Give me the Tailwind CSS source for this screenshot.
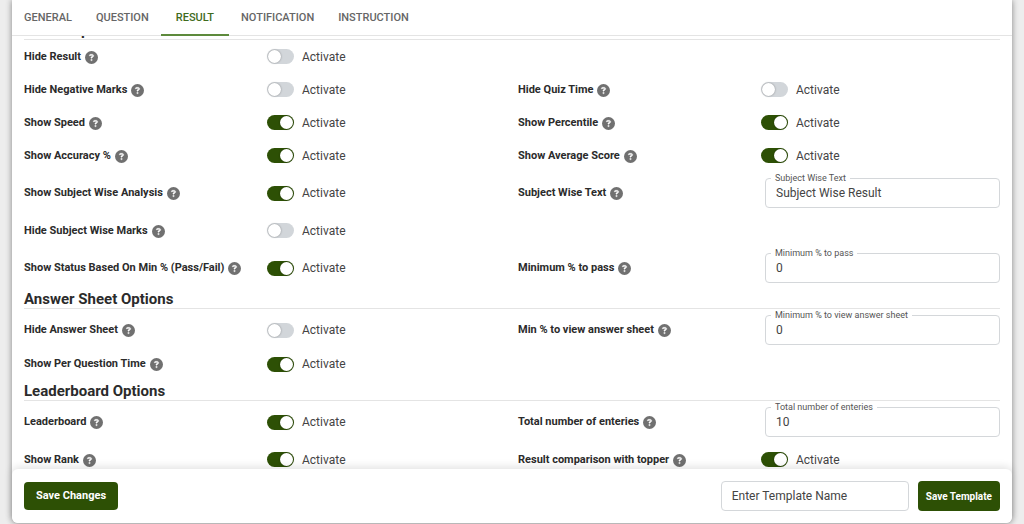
<!DOCTYPE html>
<html lang="en">
<head>
  <meta charset="UTF-8">
  <meta name="viewport" content="width=device-width, initial-scale=1.0">
  <title>Quiz Template Settings</title>
  <script src="https://cdn.jsdelivr.net/npm/@tailwindcss/browser@4"></script>
</head>
<body class="bg-[#ededed] font-['Roboto',sans-serif] text-[#2b2b2b]">
  <div class="flex h-screen flex-col px-3 pb-px">
    <div class="flex min-h-0 flex-1 flex-col rounded-b-md bg-white shadow-[0_0_6px_rgba(0,0,0,0.45)]">

      <!-- Tabs -->
      <nav class="flex h-9 shrink-0 border-b border-[#e4e4e4] text-[11px] font-medium text-[#666]">
        <button type="button" class="px-3 pt-0.5">GENERAL</button>
        <button type="button" class="px-3 pt-0.5">QUESTION</button>
        <button type="button" class="-mb-px border-b-2 border-[#5d8a3c] px-[15px] pt-0.5 text-[#3f6b1c]">RESULT</button>
        <button type="button" class="px-3 pt-0.5">NOTIFICATION</button>
        <button type="button" class="px-3 pt-0.5">INSTRUCTION</button>
      </nav>

      <!-- Settings -->
      <main class="min-h-0 flex-1 overflow-hidden px-3">
        <section class="-mt-4">
          <h2 class="h-5 border-b border-[#e4e4e4] text-[15px] leading-5 font-bold">Result Options</h2>
          <div id="result-options"></div>
        </section>
        <section>
          <h2 class="h-5 border-b border-[#e4e4e4] text-[15px] leading-5 font-bold">Answer Sheet Options</h2>
          <div id="answer-options"></div>
        </section>
        <section class="pt-1">
          <h2 class="h-5 border-b border-[#e4e4e4] text-[15px] leading-5 font-bold">Leaderboard Options</h2>
          <div id="leaderboard-options"></div>
        </section>
      </main>

      <!-- Save bar -->
      <footer class="relative flex shrink-0 items-center justify-between rounded-md bg-white px-3 py-3 shadow-[0_-2px_8px_rgba(0,0,0,0.12)]">
        <button type="button" class="h-7 rounded bg-[#2d5005] px-3 text-[11px] font-bold text-white">Save Changes</button>
        <div class="flex gap-[9px]">
          <input type="text" aria-label="Template name" placeholder="Enter Template Name"
            class="h-[30px] w-[188px] rounded border border-[#d4d7da] px-2.5 text-xs text-[#444] placeholder:text-[#444]">
          <button type="button" class="h-[30px] rounded bg-[#2d5005] px-2 text-[10px] font-bold text-white">Save Template</button>
        </div>
      </footer>
    </div>
  </div>

  <script>
    const resultRows = [
      [{ name: 'Hide Result', on: false }],
      [{ name: 'Hide Negative Marks', on: false }, { name: 'Hide Quiz Time', on: false }],
      [{ name: 'Show Speed', on: true }, { name: 'Show Percentile', on: true }],
      [{ name: 'Show Accuracy %', on: true }, { name: 'Show Average Score', on: true }],
      [{ name: 'Show Subject Wise Analysis', on: true }, { name: 'Subject Wise Text', field: 'Subject Wise Text', value: 'Subject Wise Result' }],
      [{ name: 'Hide Subject Wise Marks', on: false }],
      [{ name: 'Show Status Based On Min % (Pass/Fail)', on: true }, { name: 'Minimum % to pass', field: 'Minimum % to pass', value: '0' }]
    ];
    const answerRows = [
      [{ name: 'Hide Answer Sheet', on: false }, { name: 'Min % to view answer sheet', field: 'Minimum % to view answer sheet', value: '0' }],
      [{ name: 'Show Per Question Time', on: true }]
    ];
    const leaderboardRows = [
      [{ name: 'Leaderboard', on: true }, { name: 'Total number of enteries', field: 'Total number of enteries', value: '10' }],
      [{ name: 'Show Rank', on: true }, { name: 'Result comparison with topper', on: true }]
    ];

    const helpIcon = `
      <svg class="size-[13px] shrink-0" viewBox="0 0 512 512" aria-hidden="true">
        <circle cx="256" cy="256" r="256" fill="#707070"/>
        <path fill="#fff" stroke="#fff" stroke-width="12" d="M169.8 165.3c7.9-22.3 29.1-37.3 52.8-37.3h58.3c34.9 0 63.1 28.3 63.1 63.1c0 22.6-12.1 43.5-31.7 54.8L280 264.4c-.2 13-10.9 23.6-24 23.6c-13.3 0-24-10.7-24-24V250.5c0-8.6 4.6-16.5 12.1-20.8l44.3-25.4c4.7-2.7 7.6-7.7 7.6-13.1c0-8.4-6.8-15.1-15.1-15.1H222.6c-3.4 0-6.4 2.1-7.5 5.3l-.4 1.2c-4.4 12.5-18.2 19-30.6 14.6s-19-18.2-14.6-30.6l.4-1.2zM224 352a32 32 0 1 1 64 0 32 32 0 1 1 -64 0z"/>
      </svg>`;

    const makeSwitch = (item) => `
      <label class="flex items-center gap-2 text-xs text-[#444]">
        <input type="checkbox" aria-label="${item.name}" ${item.on ? 'checked' : ''}
          class="flex h-[15px] w-[27px] appearance-none items-center rounded-full bg-[#d2d6da] px-px before:size-[13px] before:rounded-full before:bg-white before:shadow-[0_0_2px_rgba(0,0,0,0.4)] checked:justify-end checked:bg-[#2d5005]">
        Activate
      </label>`;

    const makeField = (item) => {
      const id = item.name.toLowerCase().replace(/[^a-z]+/g, '-');
      return `
      <div class="relative ml-1">
        <label for="${id}" class="absolute -top-1.5 left-1.5 bg-white px-1 text-[9px] leading-3 text-[#555]">${item.field}</label>
        <input type="text" id="${id}" value="${item.value}" class="block h-[30px] w-full rounded border border-[#d4d7da] px-2.5 text-xs text-[#444]">
      </div>`;
    };

    const makeItem = (item) => `
      <div class="grid grid-cols-2 items-center gap-x-1">
        <div class="flex items-center gap-1 pt-px text-[11px] font-bold whitespace-nowrap">${item.name} ${helpIcon}</div>
        ${item.field ? makeField(item) : makeSwitch(item)}
      </div>`;

    const showRows = (id, rows, plainHeight) => {
      document.getElementById(id).innerHTML = rows.map(row => {
        const height = row.some(item => item.field) ? 'h-[42px]' : plainHeight;
        return `<div class="grid grid-cols-2 gap-x-3 ${height}">${row.map(makeItem).join('')}</div>`;
      }).join('');
    };

    showRows('result-options', resultRows, 'h-[33px]');
    showRows('answer-options', answerRows, 'h-[26px]');
    showRows('leaderboard-options', leaderboardRows, 'h-[33px]');
  </script>
</body>
</html>
